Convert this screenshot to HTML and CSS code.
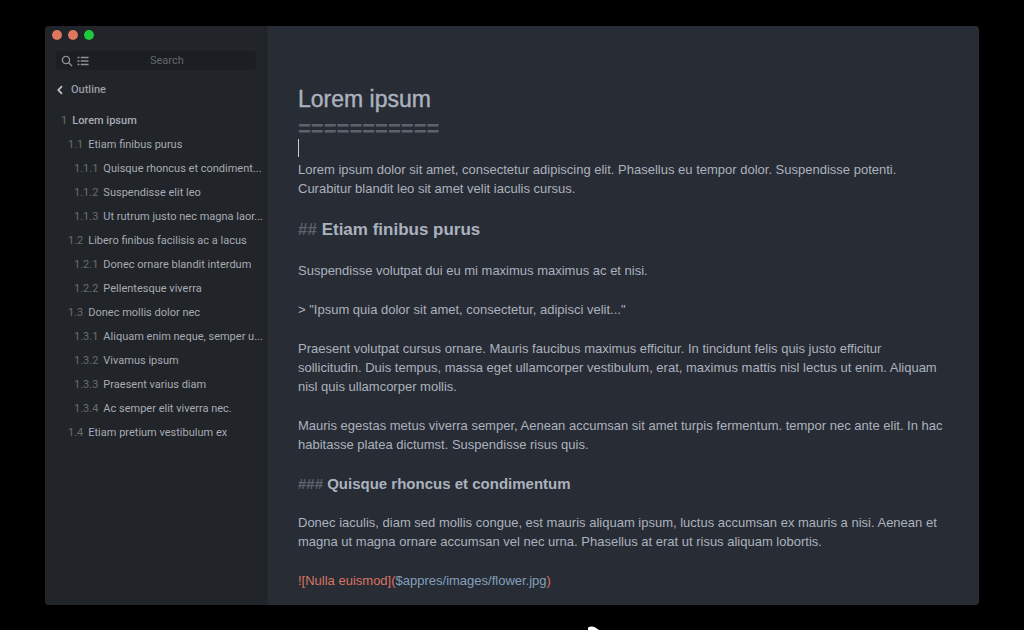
FILE: index.html
```html
<!DOCTYPE html>
<html lang="en">
<head>
<meta charset="utf-8">
<meta name="viewport" content="width=device-width, initial-scale=1">
<title>Lorem ipsum</title>
<link rel="stylesheet" href="styles.css">
</head>
<body>
<div class="window">
  <aside class="sidebar">
    <div class="lights">
      <button class="light" aria-label="Close"></button>
      <button class="light" aria-label="Minimize"></button>
      <button class="light light-green" aria-label="Zoom"></button>
    </div>
    <div class="search">
      <svg class="icon" viewBox="0 0 12 12" aria-hidden="true"><circle cx="5" cy="5" r="3.6"/><path d="M7.7 7.7 11 11"/></svg>
      <svg class="icon" viewBox="0 0 12 12" aria-hidden="true"><path d="M.5 2.5h2M.5 6h2M.5 9.500h2M3.700 2.500h7.800M3.700 6h7.800M3.700 9.500h7.800"/></svg>
      <input class="search-input" type="text" placeholder="Search" aria-label="Search">
    </div>
    <button class="back">
      <svg class="chevron" viewBox="0 0 8 10" aria-hidden="true"><path d="M6 1.200 2.300 5 6 8.800"/></svg>
      Outline
    </button>
    <nav class="outline" aria-label="Outline">
      <a class="item level1" href="#lorem"><span class="num">1</span><span class="label">Lorem ipsum</span></a>
      <a class="item level2" href="#etiam"><span class="num">1.1</span><span class="label">Etiam finibus purus</span></a>
      <a class="item level3" href="#quisque"><span class="num">1.1.1</span><span class="label">Quisque rhoncus et condiment...</span></a>
      <a class="item level3" href="#"><span class="num">1.1.2</span><span class="label">Suspendisse elit leo</span></a>
      <a class="item level3" href="#"><span class="num">1.1.3</span><span class="label">Ut rutrum justo nec magna laor...</span></a>
      <a class="item level2" href="#"><span class="num">1.2</span><span class="label">Libero finibus facilisis ac a lacus</span></a>
      <a class="item level3" href="#"><span class="num">1.2.1</span><span class="label">Donec ornare blandit interdum</span></a>
      <a class="item level3" href="#"><span class="num">1.2.2</span><span class="label">Pellentesque viverra</span></a>
      <a class="item level2" href="#"><span class="num">1.3</span><span class="label">Donec mollis dolor nec</span></a>
      <a class="item level3" href="#"><span class="num">1.3.1</span><span class="label">Aliquam enim neque, semper u...</span></a>
      <a class="item level3" href="#"><span class="num">1.3.2</span><span class="label">Vivamus ipsum</span></a>
      <a class="item level3" href="#"><span class="num">1.3.3</span><span class="label">Praesent varius diam</span></a>
      <a class="item level3" href="#"><span class="num">1.3.4</span><span class="label">Ac semper elit viverra nec.</span></a>
      <a class="item level2" href="#"><span class="num">1.4</span><span class="label">Etiam pretium vestibulum ex</span></a>
    </nav>
  </aside>
  <main class="editor">
    <h1 class="title" id="lorem">Lorem ipsum</h1>
    <div class="underline">===========</div>
    <div class="caret"></div>
    <p class="para">Lorem ipsum dolor sit amet, consectetur adipiscing elit. Phasellus eu tempor dolor. Suspendisse potenti. Curabitur blandit leo sit amet velit iaculis cursus.</p>
    <h2 class="heading2" id="etiam"><span class="mark">##</span> Etiam finibus purus</h2>
    <p class="para">Suspendisse volutpat dui eu mi maximus maximus ac et nisi.</p>
    <p class="para">&gt; "Ipsum quia dolor sit amet, consectetur, adipisci velit..."</p>
    <p class="para">Praesent volutpat cursus ornare. Mauris faucibus maximus efficitur. In tincidunt felis quis justo efficitur sollicitudin. Duis tempus, massa eget ullamcorper vestibulum, erat, maximus mattis nisl lectus ut enim. Aliquam nisl quis ullamcorper mollis.</p>
    <p class="para">Mauris egestas metus viverra semper, Aenean accumsan sit amet turpis fermentum. tempor nec ante elit. In hac habitasse platea dictumst. Suspendisse risus quis.</p>
    <h3 class="heading3" id="quisque"><span class="mark">###</span> Quisque rhoncus et condimentum</h3>
    <p class="para">Donec iaculis, diam sed mollis congue, est mauris aliquam ipsum, luctus accumsan ex mauris a nisi. Aenean et magna ut magna ornare accumsan vel nec urna. Phasellus at erat ut risus aliquam lobortis.</p>
    <p class="para image-link">![Nulla euismod](<span class="path">$appres/images/flower.jpg</span>)</p>
  </main>
</div>
<svg class="pointer" viewBox="0 0 12 4" aria-hidden="true"><path d="M0 4V1.500Q4-.5 8 2L11 4Z"/></svg>
</body>
</html>
```
FILE: styles.css
```css
* {
  box-sizing: border-box;
}

body {
  display: flex;
  min-height: 100vh;
  margin: 0;
  padding: 26px 45px 25px;
  background: #000;
  color: #abb2bf;
  font-family: "Liberation Sans", Arial, sans-serif;
}

.window {
  display: grid;
  flex: 1;
  grid-template-columns: 223px 1fr;
  border-radius: 4px;
  background: #282c34;
  overflow: hidden;
}

.sidebar {
  display: flex;
  flex-direction: column;
  min-width: 0;
  border-right: 1px solid #252830;
  background: #212428;
  font: 11px/16px Roboto, sans-serif;
}

.lights {
  display: flex;
  gap: 6px;
  padding: 4px 7px;
}

.light {
  width: 10px;
  height: 10px;
  padding: 0;
  border: 0;
  border-radius: 50%;
  background: #dd775d;
}

.light-green {
  background: #1fc83c;
}

.search {
  display: flex;
  align-items: center;
  gap: 4px;
  height: 19px;
  margin: 7px 11px 0;
  padding: 0 5px;
  border-radius: 4px;
  background: #1b1e22;
}

.icon {
  width: 12px;
  height: 12px;
  fill: none;
  stroke: #8b9099;
  stroke-width: 1.4;
}

.search-input {
  flex: 1;
  min-width: 0;
  padding: 0 57px;
  border: 0;
  outline: 0;
  background: none;
  color: #abb2bf;
  font: inherit;
}

.search-input::placeholder {
  color: #62666c;
  opacity: 1;
}

.back {
  display: flex;
  align-items: center;
  gap: 7px;
  margin: 12px 0 11px 11px;
  padding: 0;
  border: 0;
  background: none;
  color: #989da6;
  font: inherit;
  font-weight: 500;
}

.chevron {
  width: 8px;
  height: 10px;
  fill: none;
  stroke: #b9bec7;
  stroke-width: 1.8;
}

.outline {
  display: grid;
  grid-auto-rows: 24px;
}

.item {
  display: flex;
  gap: 5px;
  align-items: center;
  min-width: 0;
  padding-right: 2px;
  color: #a6abb4;
  text-decoration: none;
}

.level1 {
  padding-left: 16px;
  font-weight: 500;
}

.level2 {
  padding-left: 23px;
}

.level3 {
  padding-left: 29px;
}

.num {
  color: #686c73;
  font-weight: 400;
}

.label {
  overflow: hidden;
  text-overflow: ellipsis;
  white-space: nowrap;
}

.editor {
  min-width: 0;
  padding: 60px 36px 0 30px;
  font-size: 13px;
  line-height: 19px;
}

.title {
  margin: 0;
  font-size: 23px;
  font-weight: 400;
  line-height: 26px;
  -webkit-text-stroke: 0.4px;
}

.underline {
  margin-top: 8px;
  color: #5d626c;
  font-size: 22px;
  font-weight: 700;
  line-height: 18px;
}

.caret {
  width: 1px;
  height: 18px;
  margin: 1px 0 3px;
  background: #c5cad3;
}

.para {
  margin: 0 0 20px;
}

.para:last-child {
  margin-bottom: 0;
}

.heading2,
.heading3 {
  margin: 0 0 20px;
  font-weight: 700;
}

.heading2 {
  padding-top: 1px;
  font-size: 17px;
  line-height: 22px;
}

.heading3 {
  font-size: 15px;
  line-height: 19px;
}

.mark {
  color: #5d626c;
}

.image-link {
  color: #d97462;
}

.path {
  color: #83a0bd;
}

.pointer {
  position: absolute;
  bottom: 0;
  left: 588px;
  width: 12px;
  height: 4px;
  fill: #fff;
}
```
